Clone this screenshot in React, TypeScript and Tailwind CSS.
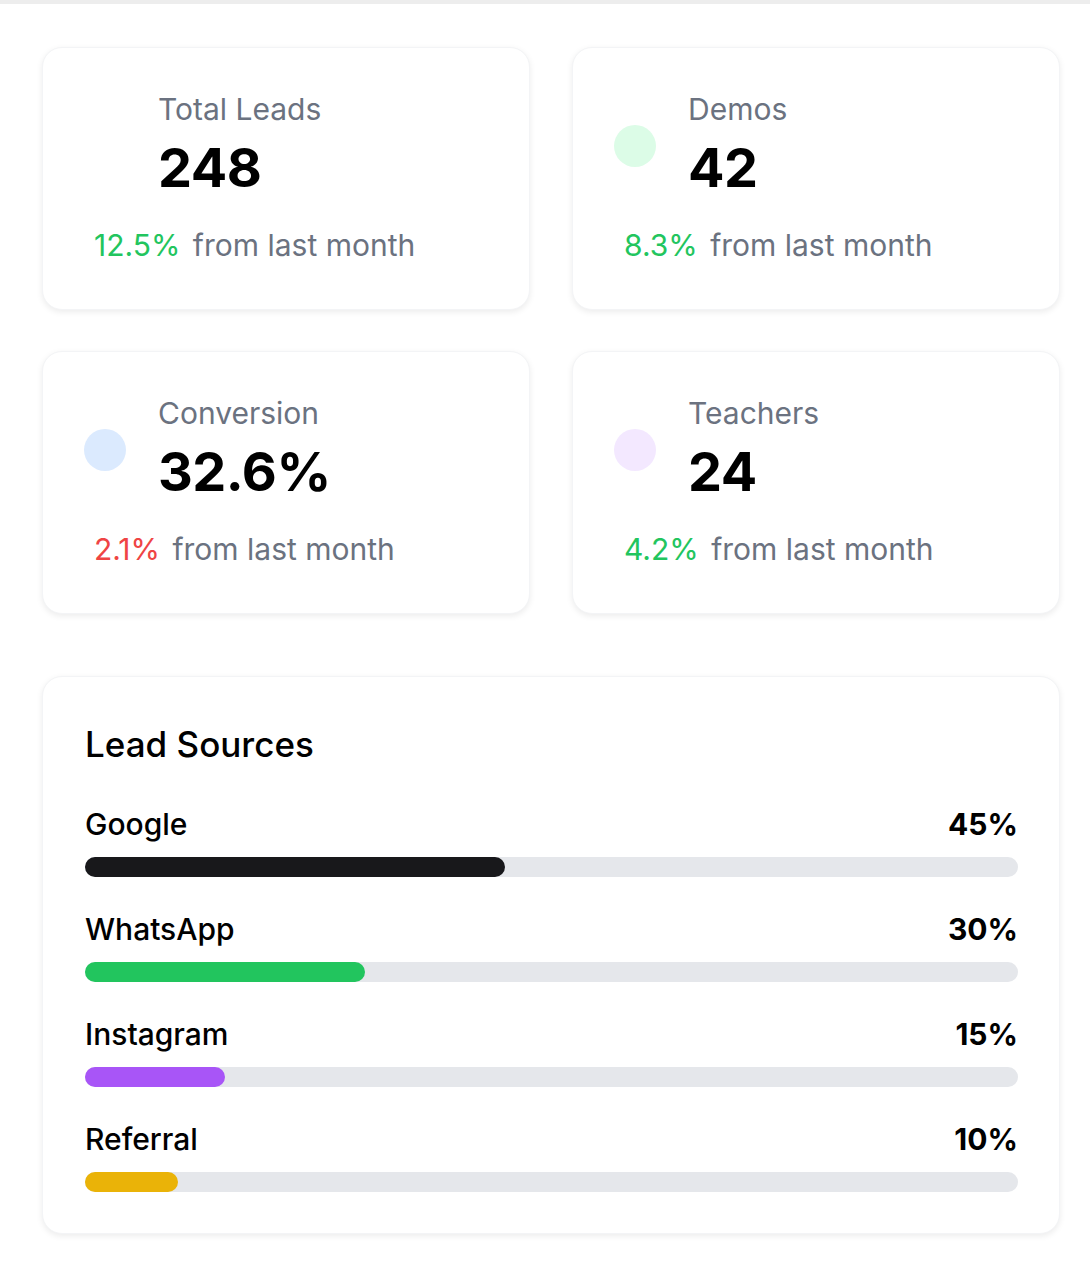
const stats = [
  { title: "Total Leads", value: "248", change: "12.5%", up: true, dot: "bg-white" },
  { title: "Demos", value: "42", change: "8.3%", up: true, dot: "bg-[#dcfce7]" },
  { title: "Conversion", value: "32.6%", change: "2.1%", up: false, dot: "bg-[#dbeafe]" },
  { title: "Teachers", value: "24", change: "4.2%", up: true, dot: "bg-[#f3e8ff]" },
];

const sources = [
  { name: "Google", pct: 45, color: "bg-[#18181b]" },
  { name: "WhatsApp", pct: 30, color: "bg-[#22c55e]" },
  { name: "Instagram", pct: 15, color: "bg-[#a855f7]" },
  { name: "Referral", pct: 10, color: "bg-[#eab308]" },
];

function StatCard({ stat }: { stat: (typeof stats)[number] }) {
  return (
    <div className="rounded-[20px] border border-[#f3f4f6] bg-white pt-[43px] pb-[44px] shadow-[0_2px_6px_rgba(0,0,0,0.08)]">
      <div className="flex items-center pl-[41px]">
        <div className={`mt-[6px] h-[42px] w-[42px] shrink-0 rounded-full ${stat.dot}`} />
        <div className="ml-[32px]">
          <p className="text-[30px] leading-[36px] text-[#6b7280]">{stat.title}</p>
          <p className="mt-[14px] text-[54px] leading-[54px] font-bold tracking-[-0.5px] text-black">{stat.value}</p>
        </div>
      </div>
      <p className="mt-[30px] pl-[51px] text-[30px] leading-[40px]">
        <span className={stat.up ? "text-[#22c55e]" : "text-[#ef4444]"}>{stat.change}</span>
        <span className="ml-1 text-[#6b7280]"> from last month</span>
      </p>
    </div>
  );
}

export default function App() {
  return (
    <div className="min-h-[1280px] bg-white font-['Inter',sans-serif]">
      <div className="h-[4px] bg-[#ededed]" />
      <div className="pt-[43px] pl-[42px] pr-[30px] pb-[46px]">
        <div className="grid grid-cols-2 gap-x-[42px] gap-y-[41px]">
          {stats.map((s) => (
            <StatCard key={s.title} stat={s} />
          ))}
        </div>

        <div className="mt-[62px] rounded-[20px] border border-[#f3f4f6] bg-white pt-[47px] pb-[41px] pl-[42px] pr-[41px] shadow-[0_2px_6px_rgba(0,0,0,0.08)]">
          <h3 className="text-[35px] leading-[40px] font-medium text-black">Lead Sources</h3>
          <div className="mt-[42px] space-y-[34px]">
            {sources.map((src) => (
              <div key={src.name}>
                <div className="flex items-center justify-between">
                  <span className="text-[30px] leading-[36px] font-medium text-black">{src.name}</span>
                  <span className="text-[30px] leading-[36px] font-bold text-black">{src.pct}%</span>
                </div>
                <div className="mt-[15px] h-[20px] w-full rounded-full bg-[#e5e7eb]">
                  <div className={`h-full rounded-full ${src.color}`} style={{ width: `${src.pct}%` }} />
                </div>
              </div>
            ))}
          </div>
        </div>
      </div>
    </div>
  );
}
